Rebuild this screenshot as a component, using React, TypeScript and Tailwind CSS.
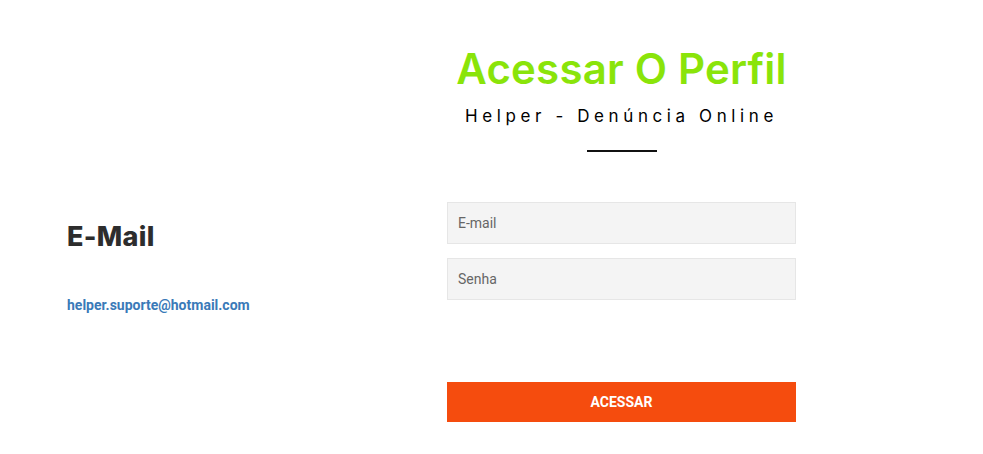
export default function App() {
  return (
    <div className="w-[983px] h-[454px] bg-white flex" style={{ fontFamily: "Roboto, 'Liberation Sans', sans-serif" }}>
      <div className="w-[447px] pl-[67px] pt-[220px] flex flex-col">
        <h2 className="text-[27px] leading-[34px] font-extrabold text-[#2d2d2d] font-['Inter',sans-serif] tracking-[0.3px]">E-Mail</h2>
        <a className="mt-[42px] text-[14px] leading-[18px] font-bold text-[#3a7ab8]">helper.suporte@hotmail.com</a>
      </div>
      <div className="w-[349px] flex flex-col">
        <div className="flex flex-col items-center pt-[44px]">
          <h1 className="text-[42px] leading-[50px] font-semibold text-[#8ae40a] font-['Inter',sans-serif] whitespace-nowrap tracking-[0.2px]">Acessar O Perfil</h1>
          <p className="mt-[11px] text-[17px] leading-[22px] text-black tracking-[4.6px] font-['Inter',sans-serif] whitespace-nowrap">Helper - Denúncia Online</p>
          <div className="mt-[23px] w-[70px] h-[2px] bg-[#111]"></div>
        </div>
        <div className="mt-[50px] h-[42px] bg-[#f4f4f4] border border-[#e6e6e6] flex items-center px-[10px] text-[14px] text-[#666]">E-mail</div>
        <div className="mt-[14px] h-[42px] bg-[#f4f4f4] border border-[#e6e6e6] flex items-center px-[10px] text-[14px] text-[#666]">Senha</div>
        <button className="mt-[82px] h-[40px] bg-[#f54c0e] text-white text-[14px] font-bold flex items-center justify-center">ACESSAR</button>
      </div>
    </div>
  );
}
